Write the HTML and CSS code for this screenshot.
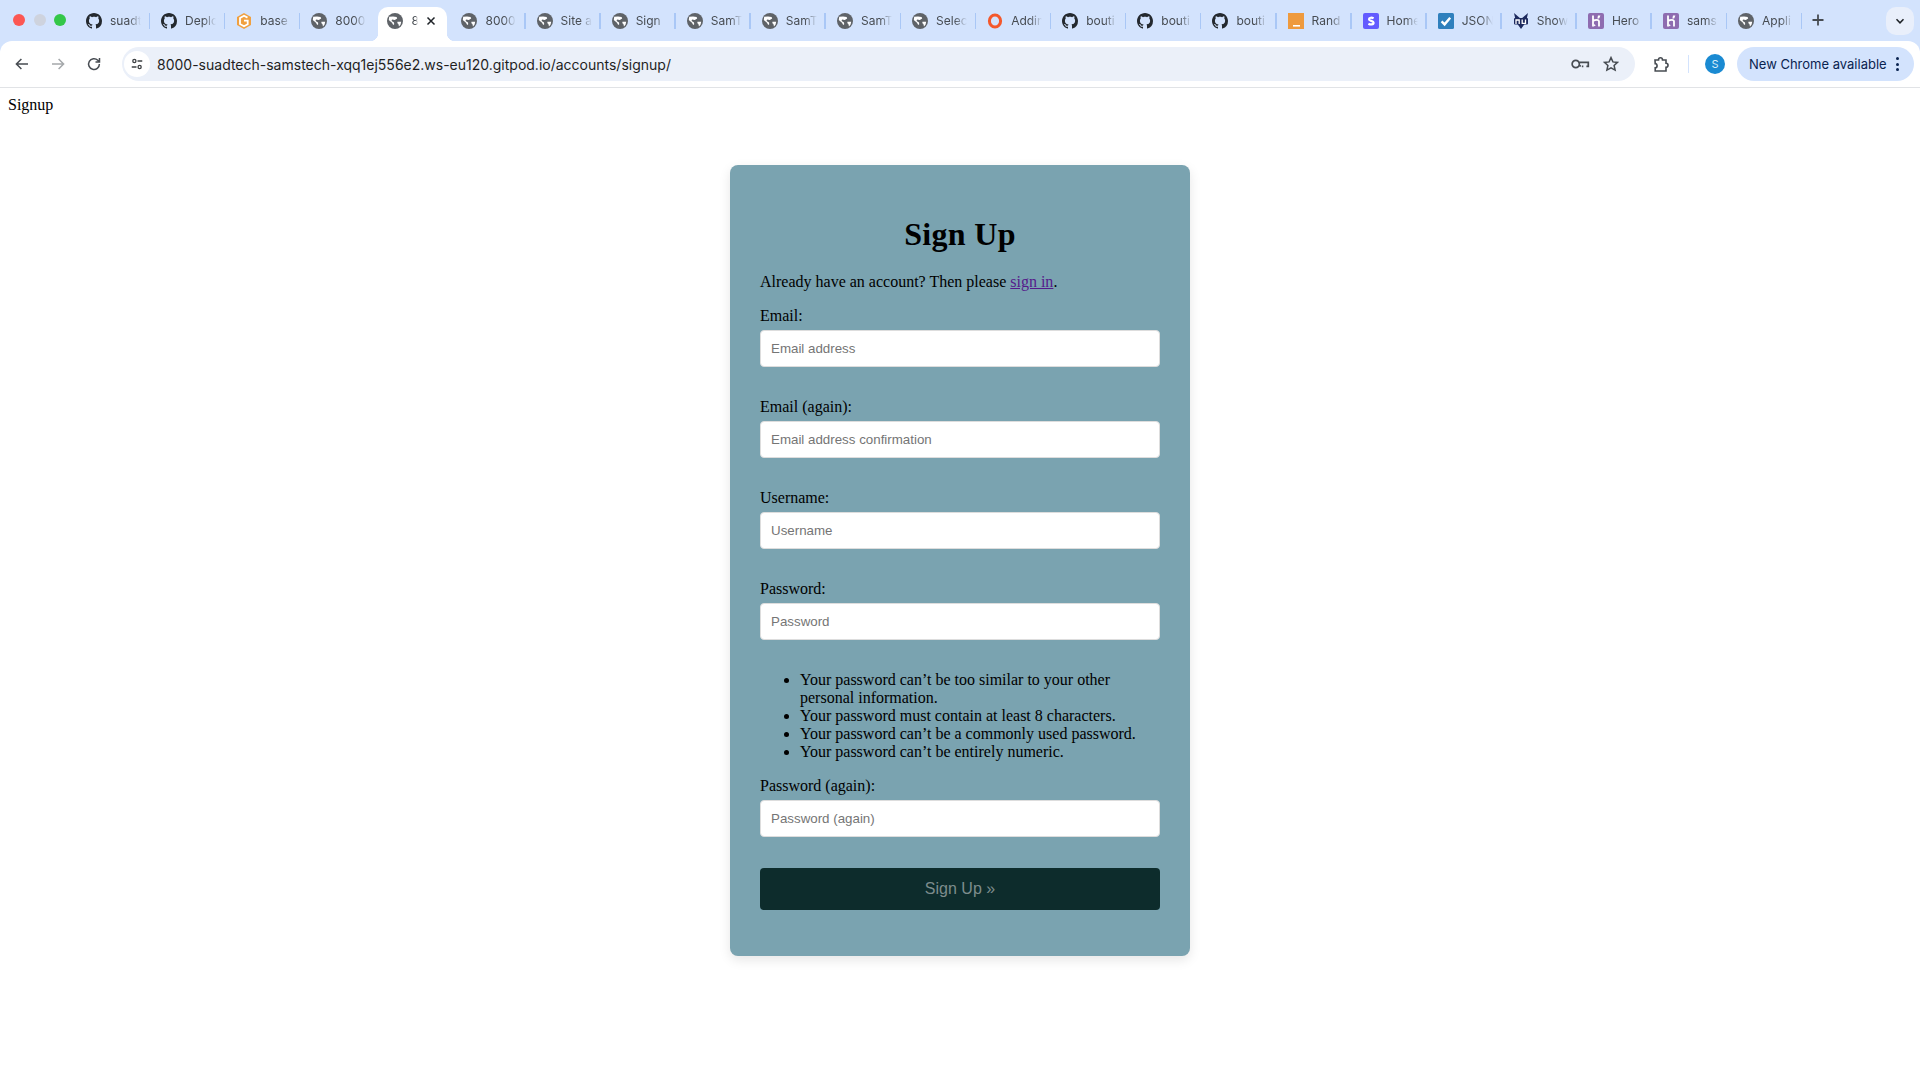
FILE: index.html
```html
<!DOCTYPE html>
<html lang="en">
<head>
<meta charset="utf-8">
<title>Signup</title>
<link rel="stylesheet" href="styles.css">
</head>
<body>
<svg class="defs" width="0" height="0" aria-hidden="true">
  <symbol id="gh" viewBox="0 0 16 16"><path fill="#24292f" d="M8 0C3.58 0 0 3.58 0 8c0 3.54 2.29 6.53 5.47 7.59.4.07.55-.17.55-.38 0-.19-.01-.82-.01-1.49-2.01.37-2.53-.49-2.69-.94-.09-.23-.48-.94-.82-1.13-.28-.15-.68-.52-.01-.53.63-.01 1.08.58 1.23.82.72 1.21 1.87.87 2.33.66.07-.52.28-.87.51-1.07-1.78-.2-3.64-.89-3.64-3.95 0-.87.31-1.59.82-2.15-.08-.2-.36-1.02.08-2.12 0 0 .67-.21 2.2.82.64-.18 1.32-.27 2-.27s1.36.09 2 .27c1.53-1.04 2.2-.82 2.2-.82.44 1.1.16 1.92.08 2.12.51.56.82 1.27.82 2.15 0 3.07-1.87 3.75-3.65 3.95.29.25.54.73.54 1.48 0 1.07-.01 1.93-.01 2.2 0 .21.15.46.55.38A8.013 8.013 0 0016 8c0-4.42-3.58-8-8-8z"/></symbol>
  <symbol id="globe" viewBox="0 0 16 16"><circle cx="8" cy="8" r="8" fill="#5f6368"/><path fill="#fff" d="M2.200 3.800 6 3.400l3.600.6.600 1.400-2.400 1.600L5 6.400 4.600 8l2.400 1.400.2 1.800-1 .8L5 9.800 1.800 7z"/><path fill="#fff" d="M10.400 8.800h3.800l-.6 2.800-1.600 2-.6-2.600-1-.8z"/></symbol>
  <symbol id="heroku" viewBox="0 0 16 16"><rect width="16" height="16" rx="2" fill="#8e6cb0"/><path fill="none" stroke="#fff" stroke-width="1.8" d="M5 2.500v11M5 8c2-1.400 6-2 6 .6v4.900"/><path fill="#fff" d="M10 2.500h2.400l-1.200 3H9.400z"/><path fill="#fff" d="M5.800 11l2 1.300-2 1.300z"/></symbol>
</svg>

<header class="chrome">
  <div class="tabstrip">
    <div class="lights"><i class="light red"></i><i class="light grey"></i><i class="light green"></i></div>
    <div class="tab"><svg class="fav"><use href="#gh"/></svg><span class="title">suadt</span></div>
    <div class="tab"><svg class="fav"><use href="#gh"/></svg><span class="title">Deplo</span></div>
    <div class="tab"><svg class="fav" viewBox="0 0 16 16"><path fill="#f0a040" d="M8 0l7 4v8l-7 4-7-4V4z"/><path fill="none" stroke="#fff" stroke-width="1.800" d="M11.500 4.600 8 2.800 4 5v6l4 2.200 3.700-2V7.600H8"/></svg><span class="title">base</span></div>
    <div class="tab nosep"><svg class="fav"><use href="#globe"/></svg><span class="title">8000</span></div>
    <div class="tab active"><svg class="fav"><use href="#globe"/></svg><span class="title short">8</span><svg class="close" viewBox="0 0 10 10"><path d="M1.500 1.500l7 7M8.500 1.500l-7 7"/></svg></div>
    <div class="tab"><svg class="fav"><use href="#globe"/></svg><span class="title">8000</span></div>
    <div class="tab"><svg class="fav"><use href="#globe"/></svg><span class="title">Site a</span></div>
    <div class="tab"><svg class="fav"><use href="#globe"/></svg><span class="title">Sign</span></div>
    <div class="tab"><svg class="fav"><use href="#globe"/></svg><span class="title">SamT</span></div>
    <div class="tab"><svg class="fav"><use href="#globe"/></svg><span class="title">SamT</span></div>
    <div class="tab"><svg class="fav"><use href="#globe"/></svg><span class="title">SamT</span></div>
    <div class="tab"><svg class="fav"><use href="#globe"/></svg><span class="title">Selec</span></div>
    <div class="tab"><svg class="fav" viewBox="0 0 16 16"><ellipse cx="8" cy="8" rx="5.600" ry="6" fill="none" stroke="#f4582c" stroke-width="3"/></svg><span class="title">Addin</span></div>
    <div class="tab"><svg class="fav"><use href="#gh"/></svg><span class="title">bouti</span></div>
    <div class="tab"><svg class="fav"><use href="#gh"/></svg><span class="title">bouti</span></div>
    <div class="tab"><svg class="fav"><use href="#gh"/></svg><span class="title">bouti</span></div>
    <div class="tab"><svg class="fav" viewBox="0 0 16 16"><rect width="16" height="16" fill="#ee9a3e"/><rect x="5" y="12" width="7" height="1.600" fill="#fff"/></svg><span class="title">Rand</span></div>
    <div class="tab"><svg class="fav" viewBox="0 0 16 16"><rect width="16" height="16" rx="2" fill="#635bff"/><path fill="none" stroke="#fff" stroke-width="2.200" d="M10.600 5.400C9 4.400 6 4.400 6 6.200c0 2 4.600 1.400 4.600 3.600 0 2-3.200 2-5.200.9"/></svg><span class="title">Home</span></div>
    <div class="tab"><svg class="fav" viewBox="0 0 16 16"><rect width="16" height="16" rx="1.500" fill="#2f80bd"/><path fill="none" stroke="#fff" stroke-width="2.400" d="M3.600 8.400l3 3 5.600-6.600"/></svg><span class="title">JSON</span></div>
    <div class="tab"><svg class="fav" viewBox="0 0 16 16"><path fill="#1d2a5e" d="M1 0l7 6 7-6-2 9-5 7-5-7z"/><rect x="1" y="5" width="14" height="6.500" rx="1" fill="#1d2a5e"/><path fill="none" stroke="#fff" stroke-width="1.300" d="M3 11V7h3.200v4M9.200 6.500v3.800h3.300V6.500"/></svg><span class="title">Show</span></div>
    <div class="tab"><svg class="fav"><use href="#heroku"/></svg><span class="title">Hero</span></div>
    <div class="tab"><svg class="fav"><use href="#heroku"/></svg><span class="title">sams</span></div>
    <div class="tab"><svg class="fav"><use href="#globe"/></svg><span class="title">Appli</span></div>
    <svg class="newtab" viewBox="0 0 12 12"><path d="M6 .5v11M.5 6h11"/></svg>
    <div class="tabsearch"><svg viewBox="0 0 10 10"><path d="M1.500 3.200 5 6.800l3.500-3.600"/></svg></div>
  </div>
  <div class="toolbar">
    <svg class="nav" viewBox="0 0 16 16"><path d="M14 8H2.600M7.400 3 2.400 8l5 5"/></svg>
    <svg class="nav off" viewBox="0 0 16 16"><path d="M2 8h11.400M8.600 3l5 5-5 5"/></svg>
    <svg class="nav" viewBox="0 0 16 16"><path d="M13.400 8a5.400 5.400 0 1 1-1.600-3.800L13.500 6M13.500 2v4h-4"/></svg>
    <div class="omnibox">
      <span class="chip"><svg viewBox="0 0 16 16"><circle cx="5" cy="4.600" r="1.800"/><path d="M8.600 4.600h5.400M2 11.400h5.400"/><circle cx="11" cy="11.400" r="1.800"/></svg></span>
      <span class="url">8000-suadtech-samstech-xqq1ej556e2.ws-eu120.gitpod.io/accounts/signup/</span>
      <svg class="omni-key" viewBox="0 0 20 12"><circle cx="5" cy="6" r="3.800"/><path d="M8.800 4.200h9.400v4.400h-2M13 8.600h-1.600M8.800 8h1.600"/></svg>
      <svg class="omni-star" viewBox="0 0 16 16"><path d="M8 1.600l1.900 4.300 4.600.5-3.400 3.100 1 4.600L8 11.800l-4.100 2.300 1-4.600L1.500 6.400l4.600-.5z"/></svg>
    </div>
    <svg class="ext" viewBox="0 0 18 18"><path d="M3 5h3.500c0-3 4-3 4 0H14v3.300c2.700 0 2.700 4 0 4V16H3.200v-3.200c2.500 0 2.500-4.200 0-4.200z"/></svg>
    <i class="tbsep"></i>
    <span class="avatar">S</span>
    <div class="update"><span>New Chrome available</span><span class="dots"><i></i><i></i><i></i></span></div>
  </div>
</header>

<main class="page">
  <p class="crumb">Signup</p>
  <section class="card">
    <h1>Sign Up</h1>
    <p class="lead">Already have an account? Then please <a href="#">sign in</a>.</p>
    <form class="form">
      <div class="field"><label for="e1">Email:</label><input id="e1" type="email" placeholder="Email address"></div>
      <div class="field"><label for="e2">Email (again):</label><input id="e2" type="email" placeholder="Email address confirmation"></div>
      <div class="field"><label for="u">Username:</label><input id="u" type="text" placeholder="Username"></div>
      <div class="field"><label for="p1">Password:</label><input id="p1" type="password" placeholder="Password"></div>
      <ul class="help">
        <li>Your password can’t be too similar to your other personal information.</li>
        <li>Your password must contain at least 8 characters.</li>
        <li>Your password can’t be a commonly used password.</li>
        <li>Your password can’t be entirely numeric.</li>
      </ul>
      <div class="field"><label for="p2">Password (again):</label><input id="p2" type="password" placeholder="Password (again)"></div>
      <button class="submit" type="button">Sign Up »</button>
    </form>
  </section>
</main>
</body>
</html>
```
FILE: styles.css
```css
* { box-sizing: border-box; }
html, body { margin: 0; height: 100%; }
body { background: #fff; color: #000; font-family: "Liberation Serif", serif; font-size: 16px; overflow: hidden; }
.defs { position: absolute; }

.chrome { height: 88px; background: #d3e3fd; border-bottom: 1px solid #e1e3e6; font-family: Inter, "Liberation Sans", sans-serif; }
.tabstrip { height: 41px; background: #d3e3fd; display: flex; align-items: flex-end; }
.lights { width: 75px; height: 41px; display: flex; align-items: center; gap: 8.500px; padding: 0 0 1px 13px; flex: none; }
.light { width: 12px; height: 12px; border-radius: 50%; }
.red { background: #fc5753; }
.grey { background: #ced3de; }
.green { background: #33c748; }

.tab { position: relative; width: 75.1px; height: 34px; padding: 0 0 7px 11px; display: flex; align-items: center; gap: 8px; flex: none; }
.tab::after { content: ""; position: absolute; right: 0; top: 6px; width: 1.500px; height: 16px; background: #a9c7f6; }
.tab.nosep::after, .tab.active::after { display: none; }
.fav { width: 16px; height: 16px; flex: none; }
.title { width: 31px; white-space: nowrap; font-size: 12px; color: #474c52; -webkit-mask: linear-gradient(90deg, #000 60%, transparent) no-repeat; mask: linear-gradient(90deg, #000 60%, transparent) no-repeat; }
.title.short { width: 7px; }
.tab.active { background: #fff; border-radius: 10px 10px 0 0; width: 69.1px; margin: 0 3px; padding-left: 9px; }
.tab.active::before { content: ""; position: absolute; left: -8px; right: -8px; bottom: 0; height: 8px; background: radial-gradient(circle at 0 0, #d3e3fd 8px, #fff 8.500px) left / 8px 8px no-repeat, radial-gradient(circle at 100% 0, #d3e3fd 8px, #fff 8.500px) right / 8px 8px no-repeat; }
.close { width: 10px; height: 10px; flex: none; fill: none; stroke: #1f2328; stroke-width: 1.500; }
.newtab { width: 12px; height: 12px; margin: 0 0 15px 10px; flex: none; fill: none; stroke: #474c52; stroke-width: 1.800; }
.tabsearch { width: 28px; height: 28px; margin: 0 6px 6px auto; border-radius: 10px; background: #e9effb; display: flex; align-items: center; justify-content: center; }
.tabsearch svg { width: 10px; height: 10px; fill: none; stroke: #1f2328; stroke-width: 1.500; }

.toolbar { height: 46px; background: #fff; border-radius: 12px 12px 0 0; padding: 6px 6px 0 14px; display: flex; align-items: flex-start; }
.nav { width: 16px; height: 16px; margin: 9px 20px 0 0; fill: none; stroke: #474c52; stroke-width: 1.500; flex: none; }
.nav.off { stroke: #a5a8ab; }
.omnibox { width: 1513px; height: 34px; border-radius: 17px; background: #ebf0f9; display: flex; align-items: center; padding: 0 16px 0 2px; flex: none; }
.chip { width: 26px; height: 26px; border-radius: 50%; background: #fff; display: flex; align-items: center; justify-content: center; flex: none; }
.chip svg { width: 14px; height: 14px; fill: none; stroke: #3d4043; stroke-width: 1.500; }
.url { margin-left: 7px; font-size: 14px; color: #1f1f1f; flex: 1; white-space: nowrap; }
.omni-key { width: 19px; height: 12px; margin-right: 13px; fill: none; stroke: #474c52; stroke-width: 1.800; flex: none; }
.omni-star { width: 16px; height: 16px; fill: none; stroke: #474c52; stroke-width: 1.500; flex: none; }
.ext { width: 18px; height: 18px; margin: 8px 0 0 17px; fill: none; stroke: #474c52; stroke-width: 1.600; flex: none; }
.tbsep { width: 1px; height: 18px; margin: 8px 0 0 18px; background: #d3e3fd; flex: none; }
.avatar { width: 20px; height: 20px; margin: 7px 0 0 16px; border-radius: 50%; background: #1a8ad2; color: #d8ecf9; font-size: 11px; display: flex; align-items: center; justify-content: center; flex: none; }
.update { width: 177px; height: 34px; margin-left: 12px; border-radius: 17px; background: #d3e3fd; color: #0a2350; font-size: 13px; display: flex; align-items: center; padding-left: 12px; gap: 9px; flex: none; white-space: nowrap; }
.dots { display: flex; flex-direction: column; gap: 2.500px; }
.dots i { width: 3px; height: 3px; border-radius: 50%; background: #0a2350; }

.page { padding: 8px; }
.crumb { margin: 0; line-height: 18px; }
.card { width: 460px; margin: 51px auto 0; padding: 30px; background: #7aa3b0; border-radius: 8px; box-shadow: 0 4px 12px rgba(0, 0, 0, .1); }
.card h1 { margin: 21.440px 0 20px; text-align: center; font-size: 32px; line-height: 37px; letter-spacing: .3px; }
.lead { margin: 0 0 16px; line-height: 18px; }
.lead a { color: #551a8b; }
.field { margin-bottom: 31px; }
.field label { display: block; margin-bottom: 5px; line-height: 18px; }
.field input { display: block; width: 100%; height: 37px; padding: 0 10px; border: 1px solid #ddd; border-radius: 4px; background: #fff; font-family: "Liberation Sans", sans-serif; font-size: 13.333px; outline: none; }
.field input::placeholder { color: #757575; opacity: 1; }
.help { margin: 0 0 16px; padding-left: 40px; line-height: 18px; }
.submit { display: block; width: 100%; height: 42px; margin: 0 0 16px; border: 0; border-radius: 4px; background: #0d2c2c; color: #7d8c8d; font-family: "Liberation Sans", sans-serif; font-size: 16px; }
```
